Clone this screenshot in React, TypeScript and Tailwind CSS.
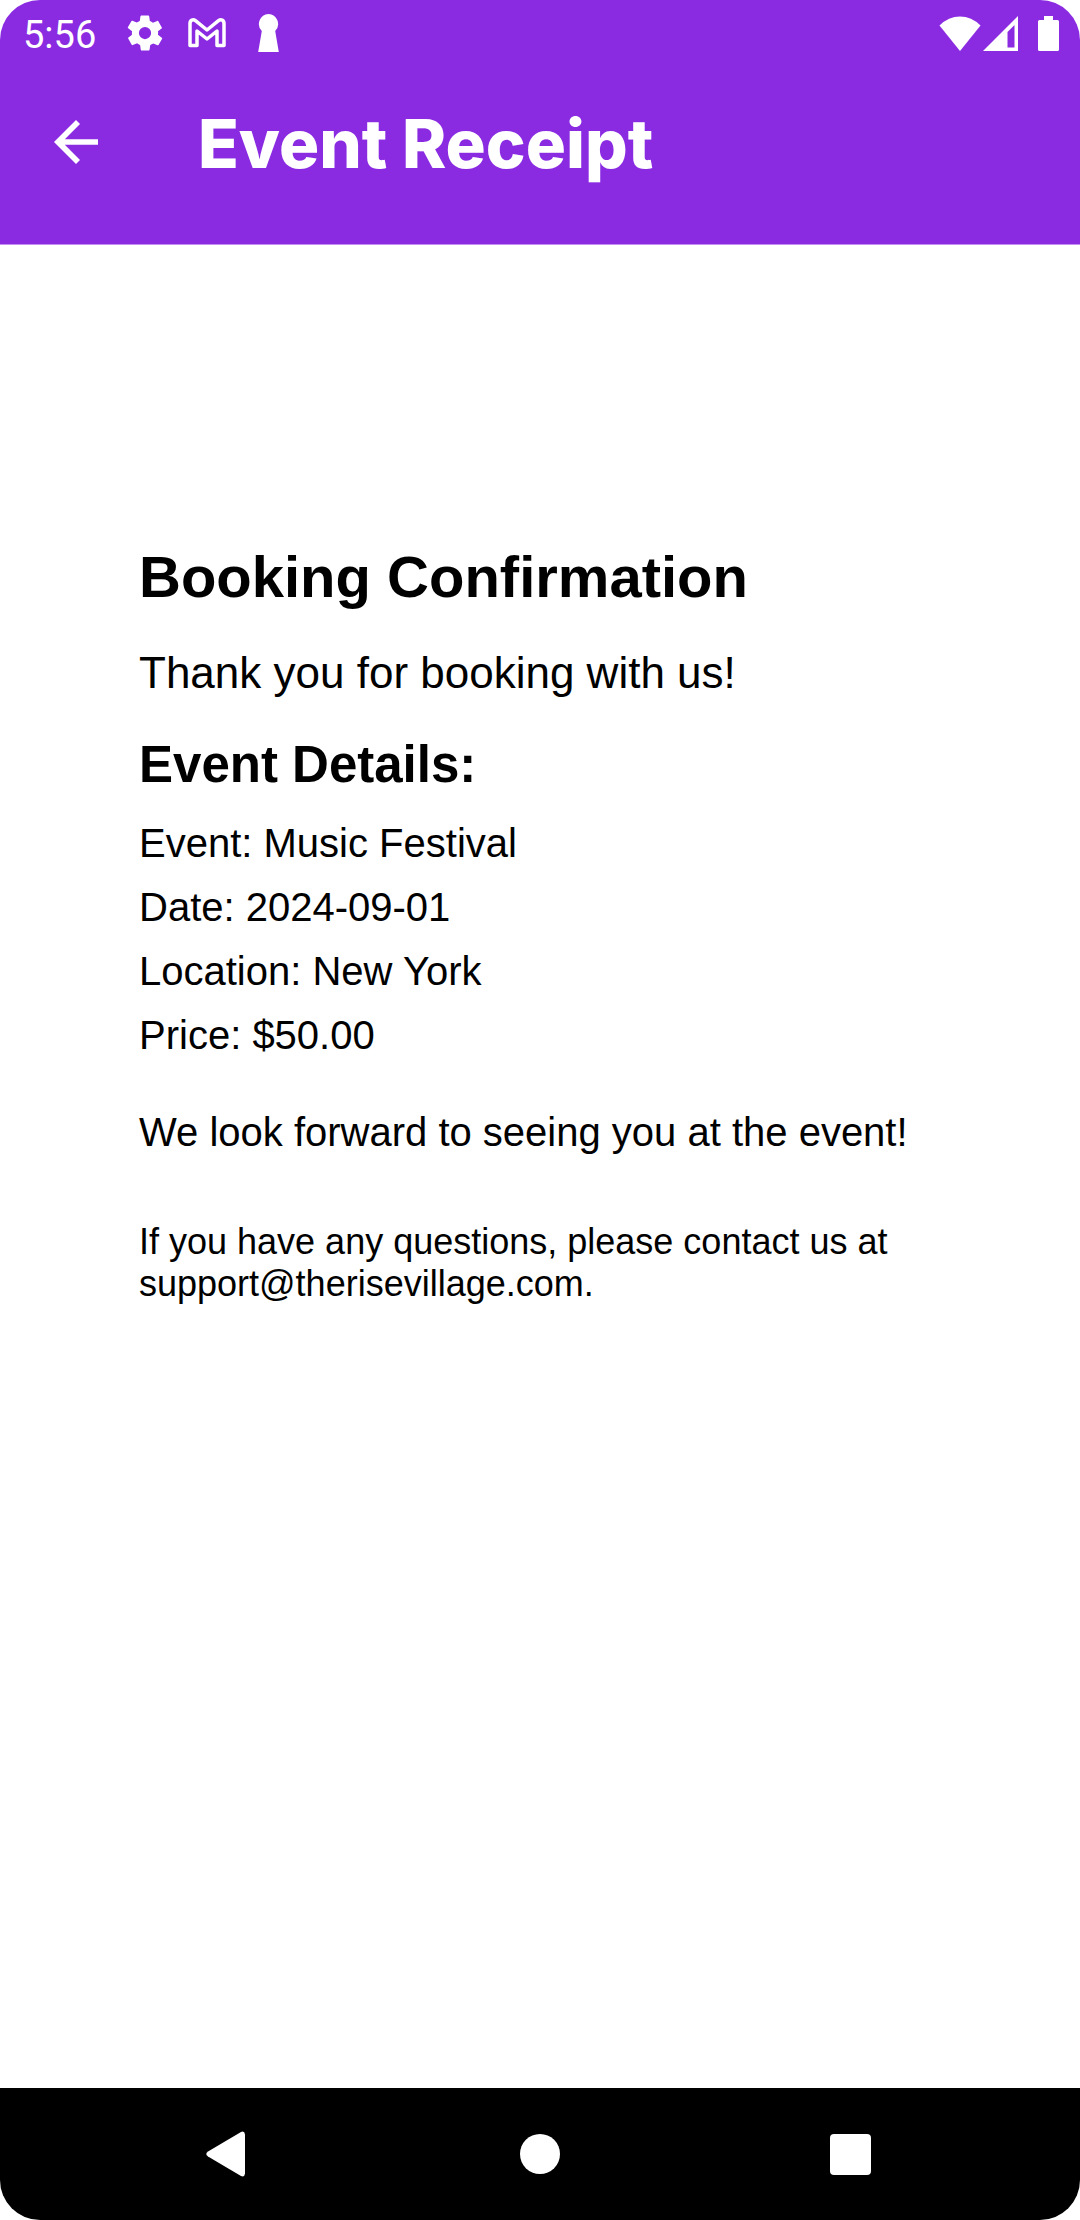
import type { ReactNode } from "react";

function StatusBar() {
  return (
    <div className="flex h-16 items-start justify-between pt-2 pr-[21px] pl-[23px]">
      <div className="flex h-[50px] items-center">
        <time className="pt-1 font-['Roboto',sans-serif] text-[38px] leading-[50px]">5:56</time>
        <svg className="ml-7 size-[42px]" viewBox="0 0 24 24" fill="currentColor" aria-label="Settings">
          <path d="M19.4 13c0-.3.1-.6.1-1s0-.7-.1-1l2.1-1.6c.2-.2.2-.4.1-.6l-2-3.5c-.1-.2-.4-.3-.6-.2l-2.5 1c-.5-.4-1.1-.7-1.7-1l-.4-2.600c0-.3-.2-.5-.5-.5h-4c-.2 0-.4.2-.5.4l-.4 2.700c-.6.2-1.100.6-1.700.9l-2.500-1c-.2 0-.5 0-.6.300l-2 3.400c-.1.2 0 .5.2.6L4.600 11c0 .3-.1.7-.1 1s0 .7.100 1l-2.100 1.600c-.2.200-.2.400-.1.600l2 3.500c.1.200.4.300.600.200l2.500-1c.500.400 1.100.700 1.700 1l.400 2.600c0 .300.200.500.500.500h4c.200 0 .500-.200.500-.400l.400-2.700c.600-.200 1.100-.600 1.700-.900l2.500 1c.200 0 .500 0 .600-.300l2-3.400c.100-.200 0-.500-.200-.600L19.400 13zM12 15.500a3.500 3.500 0 1 1 0-7 3.500 3.500 0 0 1 0 7z" />
        </svg>
        <svg className="ml-[22px] h-[30px] w-[38px]" viewBox="0 0 38 30" fill="none" stroke="currentColor" strokeWidth="3.500" strokeLinejoin="round" aria-label="Mail">
          <path d="M2 5.500V27.500H9V13L19 21L29 13V27.500H36V5.500C36 2 33 0.800 30.500 2.700L19 12L7.500 2.700C5 0.800 2 2 2 5.500Z" />
        </svg>
        <svg className="ml-8 h-[38px] w-[21px]" viewBox="0 0 21 38" fill="currentColor" aria-label="Keyhole">
          <path d="M10.500 0a10 10 0 0 1 6.700 17L20.800 38H0.200L3.800 17A10 10 0 0 1 10.500 0Z" />
        </svg>
      </div>
      <div className="flex h-[50px] items-center">
        <svg className="h-[35px] w-[42px]" viewBox="0 0 42 35" fill="currentColor" aria-label="Wi-Fi">
          <path d="M0.500 9.500Q9.500 0.500 21 0.500T41.500 9.500L21 35Z" />
        </svg>
        <svg className="ml-[2px] h-[35px] w-[35px]" viewBox="0 0 35 35" fill="currentColor" aria-label="Mobile signal">
          <path fillRule="evenodd" d="M35 0V35H0ZM31.500 9L24.500 16V31.500H31.500Z" />
        </svg>
        <svg className="ml-5 h-[35px] w-[21px]" viewBox="0 0 21 35" fill="currentColor" aria-label="Battery">
          <path d="M6 0H15V4H19.500Q21 4 21 5.500V33.500Q21 35 19.500 35H1.500Q0 35 0 33.500V5.500Q0 4 1.500 4H6Z" />
        </svg>
      </div>
    </div>
  );
}

function NavButton({ label, children }: { label: string; children: ReactNode }) {
  return (
    <button type="button" aria-label={label} className="flex size-24 items-center justify-center">
      <svg className="size-12" viewBox="0 0 48 48" fill="currentColor" aria-hidden="true">
        {children}
      </svg>
    </button>
  );
}

const details = [
  ["Event", "Music Festival"],
  ["Date", "2024-09-01"],
  ["Location", "New York"],
  ["Price", "$50.00"],
];

export default function App() {
  return (
    <div className="flex min-h-screen flex-col overflow-hidden rounded-[40px] bg-white font-['Liberation_Sans',Arial,sans-serif] text-black">
      <header className="border-b border-[#c48ff0] bg-[#8a2be2] pb-6 text-white">
        <StatusBar />
        <div className="flex h-[156px] items-center gap-12 pl-9">
          <button type="button" aria-label="Back" className="flex size-20 items-center justify-center">
            <svg className="size-11" viewBox="0 0 44 44" fill="currentColor" aria-hidden="true">
              <path d="M44 19.200V24.800H10.800L26 40L22 44L0 22L22 0L26 4L10.800 19.200Z" />
            </svg>
          </button>
          <h1 className="pt-1 pl-[34px] font-['Inter',sans-serif] text-[67px] leading-20 font-extrabold">Event Receipt</h1>
        </div>
      </header>
      <main className="flex-1 px-[139px] pt-[298px]">
        <h2 className="text-[58px] leading-[68px] font-bold">Booking Confirmation</h2>
        <p className="mt-9 text-[44px] leading-[52px]">Thank you for booking with us!</p>
        <h3 className="mt-9 text-[51px] leading-[60px] font-bold">Event Details:</h3>
        <ul className="mt-4 text-[40px] leading-16">
          {details.map(([name, value]) => (
            <li key={name}>
              {name}: {value}
            </li>
          ))}
        </ul>
        <p className="mt-10 text-[40px] leading-[50px]">We look forward to seeing you at the event!</p>
        <p className="mt-16 text-[36px] leading-[42px]">
          If you have any questions, please contact us at support@therisevillage.com.
        </p>
      </main>
      <nav aria-label="System" className="flex h-33 items-center justify-between bg-black px-45 text-white">
        <NavButton label="Back">
          <path d="M41 4.500V43.500Q40.500 47.500 37 46L4 26.500Q0.500 24 4 21.500L37 2Q40.500 0.500 41 4.500Z" />
        </NavButton>
        <NavButton label="Home">
          <circle cx="24" cy="24" r="20" />
        </NavButton>
        <NavButton label="Recent apps">
          <rect x="2" y="4" width="41" height="41" rx="4" />
        </NavButton>
      </nav>
    </div>
  );
}
